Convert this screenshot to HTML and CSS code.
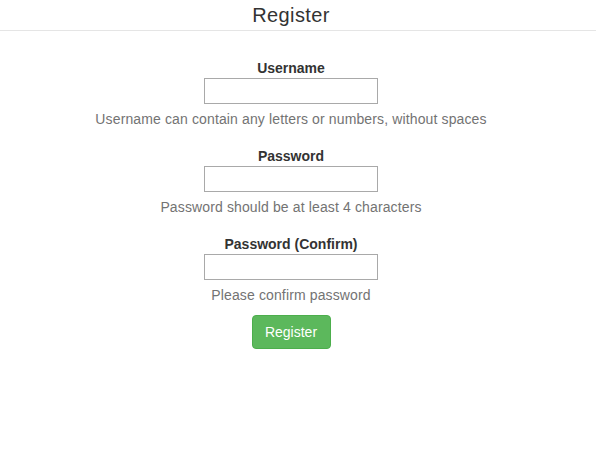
FILE: index.html
```html
<!DOCTYPE html>
<html>
<head>
<meta charset="utf-8">
<link rel="stylesheet" href="styles.css">
</head>
<body>
<div class="page">
  <header class="topbar"><h1 class="title">Register</h1></header>
  <form class="form">
    <div class="group">
      <label class="label">Username</label>
      <input class="input" type="text">
      <p class="help">Username can contain any letters or numbers, without spaces</p>
    </div>
    <div class="group">
      <label class="label">Password</label>
      <input class="input" type="password">
      <p class="help">Password should be at least 4 characters</p>
    </div>
    <div class="group">
      <label class="label">Password (Confirm)</label>
      <input class="input" type="password">
      <p class="help">Please confirm password</p>
    </div>
    <button class="btn" type="button">Register</button>
  </form>
</div>
</body>
</html>
```
FILE: styles.css
```css
html, body {
  margin: 0;
  padding: 0;
  background: #fff;
}
body {
  font-family: "Liberation Sans", Arial, sans-serif;
  font-size: 14px;
  line-height: 20px;
  color: #333;
}
.page {
  width: 582px;
}
.topbar {
  border-bottom: 1px solid #e5e5e5;
  width: 596px;
  height: 30px;
}
.title {
  margin: 0;
  width: 582px;
  text-align: center;
  font-size: 20px;
  font-weight: normal;
  line-height: 30px;
  letter-spacing: 0.4px;
  color: #333;
}
.form {
  display: flex;
  flex-direction: column;
  align-items: center;
  padding-top: 27px;
}
.group {
  display: flex;
  flex-direction: column;
  align-items: center;
  margin-bottom: 17px;
}
.label {
  font-weight: bold;
  line-height: 20px;
}
.input {
  box-sizing: border-box;
  width: 174px;
  height: 26px;
  margin: 0;
  border: 1px solid #a9a9a9;
  padding: 2px 4px;
  font-family: inherit;
  font-size: 14px;
}
.help {
  margin: 5px 0 0;
  color: #737373;
  line-height: 20px;
  letter-spacing: 0.13px;
}
.btn {
  margin-top: -7px;
  box-sizing: border-box;
  width: 79px;
  height: 34px;
  background: #5cb85c;
  border: 1px solid #4cae4c;
  border-radius: 4px;
  color: #fff;
  font-family: inherit;
  font-size: 14px;
  line-height: 20px;
  padding: 6px 12px;
}
```
